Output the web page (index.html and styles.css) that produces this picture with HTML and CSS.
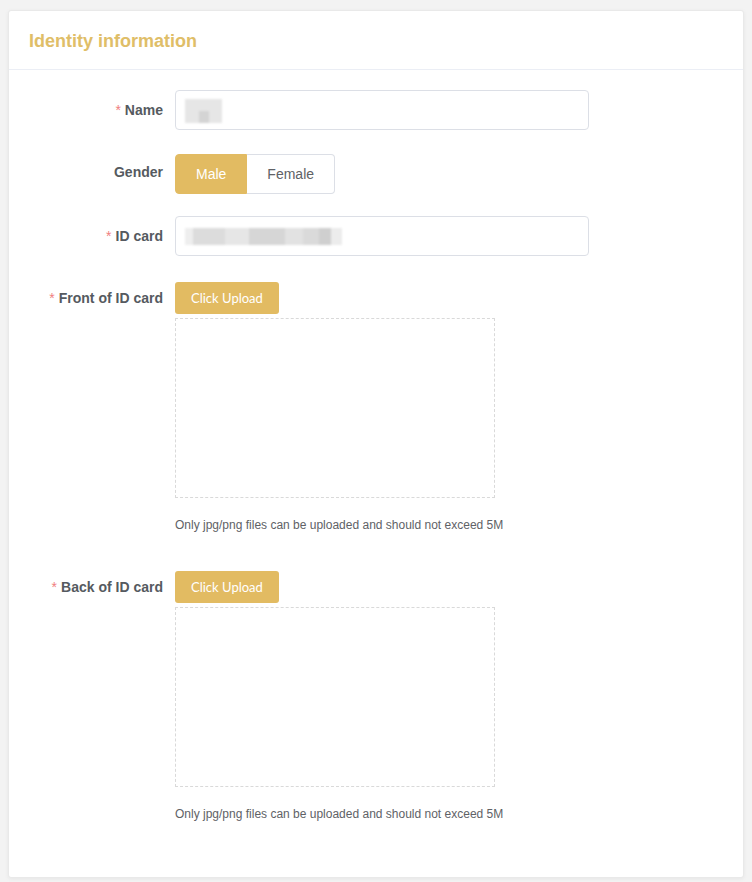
FILE: index.html
```html
<!DOCTYPE html>
<html lang="en">
<head>
<meta charset="utf-8">
<title>Identity information</title>
<link rel="stylesheet" href="styles.css">
</head>
<body>
<div class="card">
  <div class="card-header">
    <h2 class="card-title">Identity information</h2>
  </div>
  <div class="card-body">
    <form class="form">
      <div class="form-item">
        <label class="form-label"><span class="req">*</span>Name</label>
        <div class="form-content">
          <div class="input">
            <span class="blur blur-name"></span>
          </div>
        </div>
      </div>
      <div class="form-item">
        <label class="form-label">Gender</label>
        <div class="form-content">
          <div class="radio-group">
            <span class="radio-btn active">Male</span>
            <span class="radio-btn">Female</span>
          </div>
        </div>
      </div>
      <div class="form-item">
        <label class="form-label"><span class="req">*</span>ID card</label>
        <div class="form-content">
          <div class="input">
            <span class="blur blur-id"></span>
          </div>
        </div>
      </div>
      <div class="form-item">
        <label class="form-label"><span class="req">*</span>Front of ID card</label>
        <div class="form-content">
          <div class="upload-line"><button type="button" class="upload-btn">Click Upload</button></div>
          <div class="upload-box"></div>
          <div class="tip">Only jpg/png files can be uploaded and should not exceed 5M</div>
        </div>
      </div>
      <div class="form-item">
        <label class="form-label"><span class="req">*</span>Back of ID card</label>
        <div class="form-content">
          <div class="upload-line"><button type="button" class="upload-btn">Click Upload</button></div>
          <div class="upload-box"></div>
          <div class="tip">Only jpg/png files can be uploaded and should not exceed 5M</div>
        </div>
      </div>
    </form>
  </div>
</div>
</body>
</html>
```
FILE: styles.css
```css
html {
  background: #f3f3f3;
}
body {
  margin: 0;
  padding: 10px 8px 5px 8px;
  font-family: "Liberation Sans", Arial, sans-serif;
  font-size: 14px;
  color: #606266;
}
.card {
  background: #fff;
  border: 1px solid #e9e9e9;
  border-radius: 3px;
  box-shadow: 0 1px 4px rgba(0, 0, 0, 0.06);
}
.card-header {
  padding: 19px 20px 17px 20px;
  border-bottom: 1px solid #ebeef5;
}
.card-title {
  margin: 0;
  font-size: 18px;
  line-height: 22px;
  font-weight: bold;
  color: #dfbe68;
}
.card-body {
  padding: 20px 20px 43px 20px;
}
.form {
  margin: 0;
}
.form-item {
  display: flex;
  margin-bottom: 22px;
}
.form-item:last-child {
  margin-bottom: 0;
}
.form-label {
  width: 146px;
  flex: none;
  box-sizing: border-box;
  padding-right: 12px;
  text-align: right;
  line-height: 40px;
  font-weight: bold;
  color: #555a60;
}
.req {
  color: #f08080;
  font-weight: normal;
  margin-right: 4px;
}
.form-content {
  flex: 1;
  min-width: 0;
}
.input {
  width: 414px;
  height: 40px;
  box-sizing: border-box;
  border: 1px solid #dcdfe6;
  border-radius: 4px;
  padding: 0 9px;
  display: flex;
  align-items: center;
}
.blur {
  display: block;
  filter: blur(1.2px);
}
.blur-name {
  width: 37px;
  height: 24px;
  margin-top: 2px;
  background:
    linear-gradient(#d4d4d4, #d4d4d4) 14px 12px / 10px 12px no-repeat,
    linear-gradient(#e6e6e6, #e6e6e6) 0 0 / 37px 24px no-repeat;
}
.blur-id {
  width: 157px;
  height: 17px;
  margin-top: 1px;
  background:
    linear-gradient(90deg,
      #eeeeee 0, #eeeeee 8px,
      #dcdcdc 8px, #dcdcdc 40px,
      #e6e6e6 40px, #e6e6e6 64px,
      #d6d6d6 64px, #d6d6d6 100px,
      #e2e2e2 100px, #e2e2e2 118px,
      #dadada 118px, #dadada 134px,
      #cfcfcf 134px, #cfcfcf 146px,
      #ececec 146px, #ececec 157px);
}
.radio-group {
  display: flex;
  margin-top: 2px;
}
.radio-btn {
  display: block;
  height: 40px;
  line-height: 38px;
  box-sizing: border-box;
  padding: 0 20px;
  border: 1px solid #dcdfe6;
  color: #606266;
  font-size: 14px;
  background: #fff;
}
.radio-btn:first-child {
  border-radius: 4px 0 0 4px;
}
.radio-btn:last-child {
  border-radius: 0 4px 4px 0;
  border-left: 0;
}
.radio-btn.active {
  background: #e2bb62;
  border-color: #e2bb62;
  color: #fff;
}
.upload-line {
  height: 40px;
  display: flex;
  align-items: center;
}
.upload-btn {
  height: 32px;
  padding: 0 16px;
  border: 0;
  border-radius: 3px;
  background: #e2bb62;
  color: #fff;
  font-family: Lato, "Open Sans", sans-serif;
  font-size: 13px;
  line-height: 32px;
}
.upload-box {
  width: 320px;
  height: 180px;
  box-sizing: border-box;
  border: 1px dashed #d9d9d9;
  margin-top: 0;
}
.tip {
  margin-top: 7px;
  line-height: 40px;
  font-size: 12px;
  color: #606266;
}
```
